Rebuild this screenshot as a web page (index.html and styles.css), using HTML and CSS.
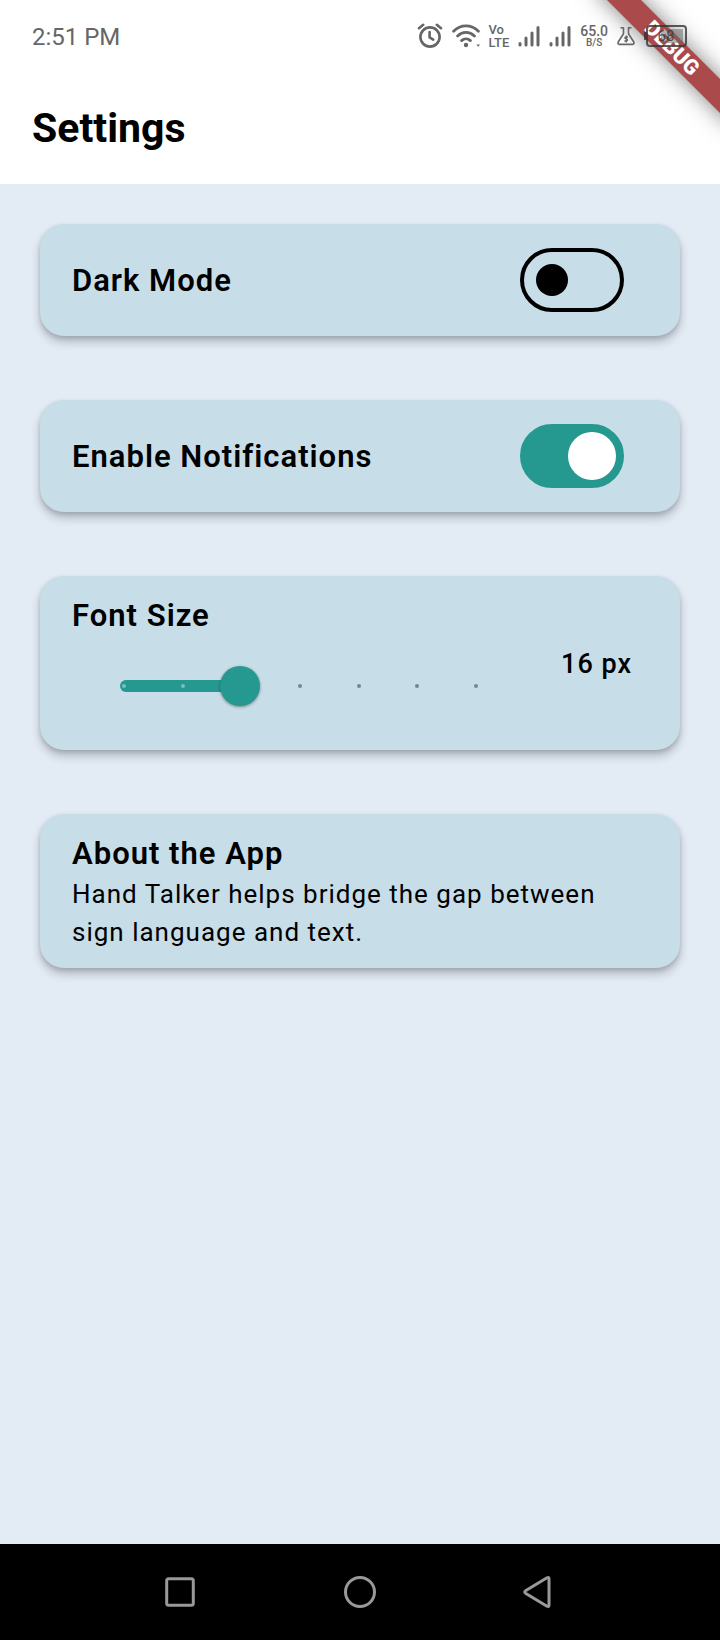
FILE: index.html
```html
<!DOCTYPE html>
<html lang="en">
<head>
<meta charset="utf-8">
<meta name="viewport" content="width=device-width, initial-scale=1">
<title>Settings</title>
<link rel="stylesheet" href="styles.css">
</head>
<body>
<div class="screen">
  <header class="top">
    <div class="status">
      <span class="time">2:51 PM</span>
      <div class="status-icons">
        <svg class="alarm" width="26" height="26" viewBox="0 0 26 26" fill="none" stroke="currentColor" stroke-width="2.6" stroke-linecap="round" stroke-linejoin="round"><circle cx="13" cy="14" r="9.6"/><path d="M12.6 9v5.4l3.6 2.2M2 5.2l4.2-3.4M24 5.2l-4.2-3.4"/></svg>
        <svg class="wifi" width="28" height="24" viewBox="0 0 28 24" fill="none" stroke="currentColor" stroke-width="2.8" stroke-linecap="round"><path d="M1.6 7.2C8.6.2 19.4.2 26.4 7.2M5.6 12c4.8-4.8 12-4.8 16.800 0M9.600 16.600c2.600-2.400 6.200-2.400 8.800 0"/><circle cx="14" cy="21" r="2.200" fill="currentColor" stroke="none"/><path d="M24.400 20.400h3.600l-1.800 2.400z" fill="currentColor" stroke="none"/></svg>
        <span class="pair volte"><span>Vo</span><span>LTE</span></span>
        <svg class="signal" width="22" height="22" viewBox="0 0 22 22" stroke="currentColor" stroke-width="3" stroke-linecap="round"><path d="M2 18.500v1.500M8 13v7M14 8v12M20 2.500v17.500"/></svg>
        <svg class="signal" width="22" height="22" viewBox="0 0 22 22" stroke="currentColor" stroke-width="3" stroke-linecap="round"><path d="M2 18.500v1.500M8 13v7M14 8v12M20 2.500v17.500"/></svg>
        <span class="pair speed"><span>65.0</span><span class="unit">B/S</span></span>
        <svg class="flask" width="18" height="20" viewBox="0 0 18 20" fill="none" stroke="currentColor" stroke-width="1.600" stroke-linejoin="round"><path d="M3.500 1.800h3v6L1.200 16q-.8 2 1.200 2.400h13.200q2-.4 1.200-2.400L11.500 7.800v-6h3"/><path d="M11 11H9q-1.400.2-1 1.400l2 .8q1 1.200-.4 1.800H7.400M9.300 9.500v7" stroke-width="1.300"/></svg>
        <svg class="battery" width="44" height="24" viewBox="0 0 44 24"><path d="M17 5h22v14H17z" fill="currentColor" opacity=".5"/><rect x="3" y="2" width="39" height="20" rx="3" fill="none" stroke="#333" stroke-opacity=".8" stroke-width="2"/><path d="M1.200 8v8" stroke="#333" stroke-opacity=".8" stroke-width="2.400"/><text x="22" y="17" text-anchor="middle" class="charge">68</text></svg>
      </div>
    </div>
    <h1>Settings</h1>
    <div class="banner-corner"><div class="banner">DEBUG</div></div>
  </header>
  <main>
    <section class="card row">
      <label class="title" for="dark">Dark Mode</label>
      <input class="switch" id="dark" type="checkbox" role="switch">
    </section>
    <section class="card row">
      <label class="title" for="notify">Enable Notifications</label>
      <input class="switch" id="notify" type="checkbox" role="switch" checked>
    </section>
    <section class="card">
      <label class="title" for="size">Font Size</label>
      <div class="size-row">
        <div class="slider">
          <div class="fill"></div>
          <div class="ticks"><i class="on"></i><i class="on"></i><i class="on"></i><i></i><i></i><i></i><i></i></div>
          <input id="size" type="range" min="12" max="24" step="2" value="16">
        </div>
        <output class="value" for="size">16 px</output>
      </div>
    </section>
    <section class="card">
      <h2 class="title">About the App</h2>
      <p>Hand Talker helps bridge the gap between sign language and text.</p>
    </section>
  </main>
  <nav class="nav">
    <button aria-label="Recent apps"><svg width="34" height="34" viewBox="0 0 34 34"><rect x="3.700" y="3.700" width="26.600" height="26.600" rx="2"/></svg></button>
    <button aria-label="Home"><svg width="34" height="34" viewBox="0 0 34 34"><circle cx="17" cy="17" r="14.500"/></svg></button>
    <button aria-label="Back"><svg width="34" height="34" viewBox="0 0 34 34"><path d="M2.500 15.800L24 2.800q2-1 2 1v26.400q0 2-2 1L2.500 18.200q-1.500-1.200 0-2.400z"/></svg></button>
  </nav>
</div>
</body>
</html>
```
FILE: styles.css
```css
* { box-sizing: border-box; }

body {
  margin: 0;
  font-family: Roboto, "Liberation Sans", sans-serif;
  color: #000;
}

.screen {
  min-height: 100vh;
  display: flex;
  flex-direction: column;
  background: #e3ebf5;
}

.top {
  position: relative;
  background: #fff;
}

.status {
  position: relative;
  z-index: 1;
  height: 72px;
  padding: 0 32px;
  display: flex;
  align-items: center;
  justify-content: space-between;
  color: #666;
}

.time {
  padding-top: 2px;
  font-size: 24px;
  line-height: 28px;
}

.status-icons {
  display: flex;
  align-items: center;
  gap: 9px;
}

.pair {
  display: flex;
  flex-direction: column;
  align-items: center;
  font-weight: 500;
}

.volte {
  align-items: flex-start;
  font-size: 13px;
  line-height: 13px;
}

.speed {
  font-size: 14px;
  line-height: 13px;
}

.unit {
  font-size: 10px;
  line-height: 10px;
}

.charge {
  font-size: 15px;
  fill: #333;
  fill-opacity: 0.8;
}

h1 {
  margin: 0;
  padding: 1px 32px 0;
  font-size: 41px;
  font-weight: 700;
  line-height: 111px;
}

.banner-corner {
  position: absolute;
  top: 0;
  right: 0;
  width: 160px;
  height: 160px;
  overflow: hidden;
  pointer-events: none;
}

.banner {
  position: absolute;
  top: 36px;
  right: -52px;
  width: 200px;
  transform: rotate(45deg);
  background: rgba(156, 42, 42, 0.85);
  box-shadow: 0 0 22px rgba(0, 0, 0, 0.5);
  color: #fff;
  font-size: 21px;
  font-weight: 900;
  line-height: 24px;
  text-align: center;
}

main {
  flex: 1;
  padding: 40px;
  display: flex;
  flex-direction: column;
  gap: 64px;
}

.card {
  padding: 18px 48px 17px 32px;
  border-radius: 24px;
  background: #c7dde8;
  box-shadow: 0 6px 10px rgba(0, 0, 0, 0.22), 0 2px 4px rgba(0, 0, 0, 0.12);
}

.row {
  padding: 24px 56px 24px 32px;
  display: flex;
  align-items: center;
  justify-content: space-between;
}

.title {
  display: block;
  margin: 0;
  font-size: 31px;
  font-weight: 600;
  line-height: 43px;
  letter-spacing: 1px;
}

.switch {
  appearance: none;
  margin: 0;
  width: 104px;
  height: 64px;
  padding: 12px;
  border: 4px solid #000;
  border-radius: 32px;
  display: flex;
  align-items: center;
}

.switch::before {
  content: "";
  width: 32px;
  height: 32px;
  border-radius: 50%;
  background: #000;
}

.switch:checked {
  padding: 4px;
  justify-content: flex-end;
  border-color: #25998f;
  background: #25998f;
}

.switch:checked::before {
  width: 48px;
  height: 48px;
  background: #fff;
}

.size-row {
  display: flex;
  justify-content: space-between;
}

.slider {
  flex: 1;
  max-width: 428px;
  height: 96px;
  padding: 2px 0 0 28px;
  display: grid;
  align-items: center;
}

.slider > * { grid-area: 1 / 1; }

.fill {
  width: 33%;
  height: 12px;
  margin-left: 20px;
  border-radius: 6px;
  background: #25998f;
}

.ticks {
  margin: 0 20px;
  padding: 0 2px;
  display: flex;
  justify-content: space-between;
}

.ticks i {
  width: 4px;
  height: 4px;
  border-radius: 50%;
  background: #74878f;
}

.ticks .on { background: #7cbfbb; }

.slider input {
  appearance: none;
  width: 100%;
  height: 40px;
  margin: 0;
  background: transparent;
}

.slider input::-webkit-slider-thumb {
  appearance: none;
  width: 40px;
  height: 40px;
  border-radius: 50%;
  background: #25998f;
  box-shadow: 0 1px 3px rgba(0, 0, 0, 0.4);
}

.value {
  padding-top: 8px;
  font-size: 27px;
  font-weight: 500;
  line-height: 38px;
  letter-spacing: 1px;
}

p {
  margin: 0;
  font-size: 26px;
  line-height: 38px;
  letter-spacing: 1px;
}

.nav {
  height: 96px;
  padding: 0 90px;
  display: flex;
  background: #000;
}

.nav button {
  flex: 1;
  padding: 0;
  border: 0;
  background: none;
  display: flex;
  align-items: center;
  justify-content: center;
}

.nav svg {
  fill: none;
  stroke: #999;
  stroke-width: 3;
}
```
